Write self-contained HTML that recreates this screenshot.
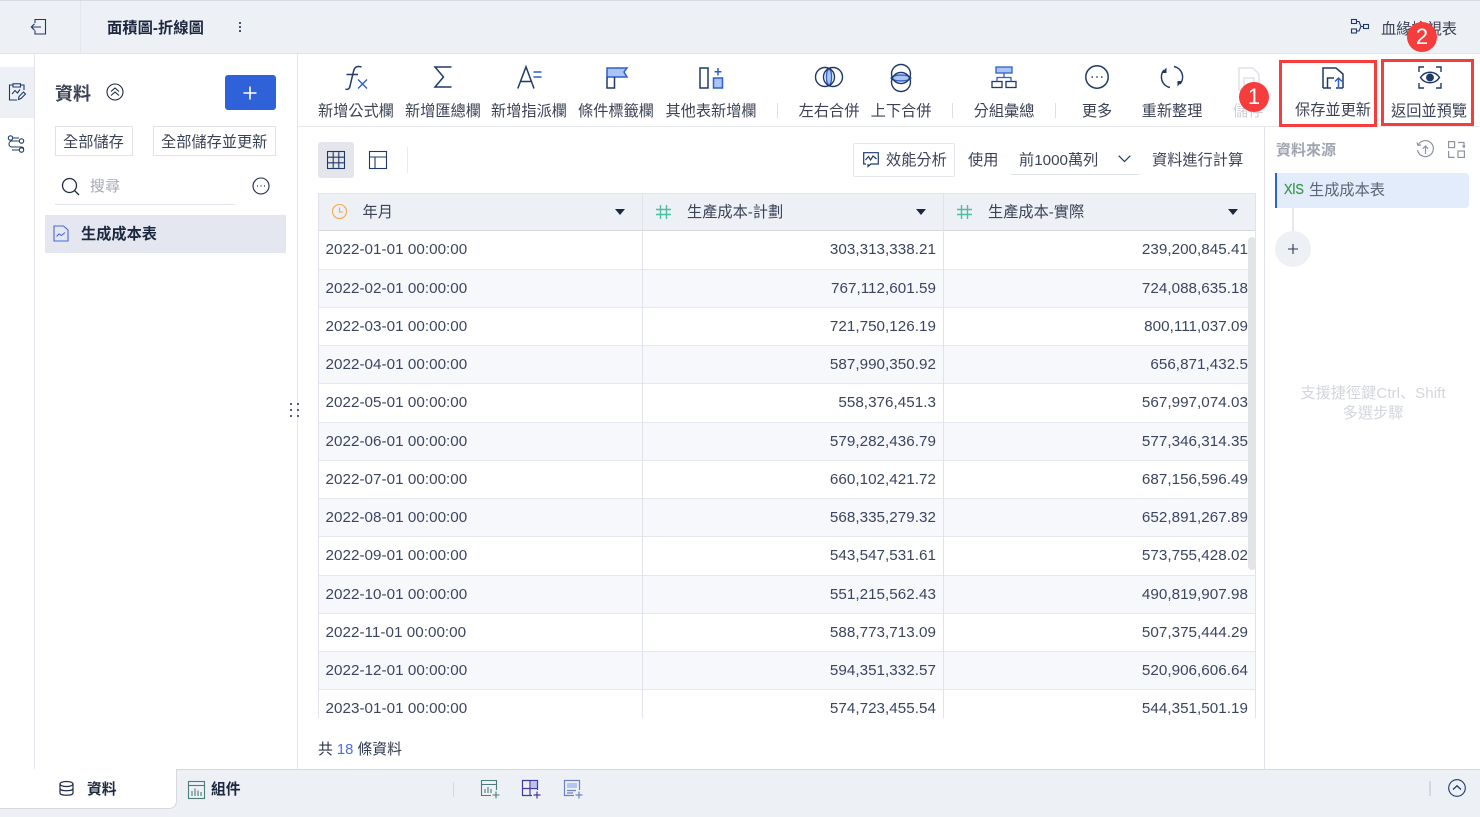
<!DOCTYPE html>
<html lang="zh-TW"><head><meta charset="utf-8"><title>面積圖-折線圖</title>
<style>
html,body{margin:0;padding:0;width:1480px;height:817px;overflow:hidden;background:#fff}
body{position:relative;font-family:"Liberation Sans","Noto Sans CJK SC",sans-serif;font-size:15.2px;color:#2c3650;fill:none;stroke:#1f3a68;stroke-width:1.5}
.a{position:absolute}
.t{position:absolute;white-space:nowrap;line-height:20px;height:20px}
.c{transform:translateX(-50%)}
.b{font-weight:700;color:#1d2740}
.l{color:#3a4356}
svg{position:absolute;overflow:visible}
.r{position:absolute;left:319px;width:937px;height:38.25px;border-bottom:1px solid #e6e8f0;box-sizing:border-box}
.r.e{background:#f7f8fc}
.r span{position:absolute;top:9px;line-height:20px;white-space:nowrap;color:#3a4560;letter-spacing:.04px}
.r .d{left:6.5px}.r .p{right:320px}.r .q{right:8px}
.bx{position:absolute;border:3px solid #f53d3d;box-sizing:border-box}
.dot{position:absolute;width:30px;height:30px;border-radius:50%;background:#f53d3d;color:#fff;font-size:22px;line-height:30px;text-align:center}
</style></head><body>

<!-- top bar -->
<div class="a" style="left:0;top:0;width:1480px;height:54px;background:#edf0f5;border-top:1px solid #d8dbe2;border-bottom:1px solid #e1e4ea;box-sizing:border-box"></div>
<div class="a" style="left:80px;top:1px;width:1px;height:52px;background:#e3e6ec"></div>
<svg style="left:30px;top:18px" width="18" height="18" viewBox="0 0 18 18" stroke-width="1.100"><path d="M5 5V1.500H15.500V16H5V12.500M11 9H1.500M4.500 5.800L1.300 9L4.500 12.200"/></svg>
<div class="t b" style="left:107px;top:19px;font-size:15.300px">面積圖-折線圖</div>
<div class="a" style="left:239px;top:22px;width:2px;height:2px;background:#444e60;box-shadow:0 4px #444e60,0 8px #444e60"></div>
<svg style="left:1351px;top:19px" width="18" height="16" viewBox="0 0 18 16" stroke-width="1.100"><rect x=".5" y=".5" width="5" height="4"/><rect x=".5" y="10" width="5" height="4"/><rect x="12.500" y="5.500" width="5" height="4"/><path d="M5.500 2.500H8L10 7.500H12.500M5.500 12H8L10 7.500"/></svg>
<div class="t l" style="left:1381px;top:20px;font-size:15.200px">血緣檢視表</div>

<!-- left rail -->
<div class="a" style="left:0;top:67px;width:34px;height:51px;background:#edf0f5"></div>
<div class="a" style="left:34px;top:54px;width:1px;height:715px;background:#e4e6ec"></div>
<svg style="left:8px;top:83px" width="18" height="18" viewBox="0 0 18 18" stroke-width="1.100"><path d="M5 2H1.500V17H9M12.500 2H16V7M5 .8H12.500V4H5ZM4 11L7 7.500L9.500 10L12 6.500"/><path d="M10.500 16.500L11 13.500L15.500 9L17.500 11L13 15.500Z" /></svg>
<svg style="left:7px;top:135px" width="18" height="18" viewBox="0 0 18 18" stroke-width="1.100"><circle cx="3.500" cy="3" r="2.200"/><circle cx="14.500" cy="6" r="2.200"/><circle cx="14.500" cy="15" r="2.200"/><path d="M5.700 3H12M12.300 6H5C1 6 1 12 5 12H14C15.500 12 16.500 12.500 16.500 13.500M12.300 15H5"/></svg>

<!-- data panel -->
<div class="a" style="left:297px;top:54px;width:1px;height:715px;background:#e4e6ec"></div>
<div class="t b" style="left:55px;top:84px;font-size:18px;color:#3a4254">資料</div>
<svg style="left:106px;top:83px" width="18" height="18" viewBox="0 0 18 18" stroke-width="1.100" stroke="#1f2a44"><circle cx="9" cy="9" r="8"/><path d="M5 8.500L9 5L13 8.500M5 12.500L9 9L13 12.500"/></svg>
<div class="a" style="left:225px;top:75px;width:51px;height:35px;background:#2f62d9;border-radius:3px"></div>
<svg style="left:243px;top:86px" width="14" height="14" viewBox="0 0 14 14" stroke="#fff" stroke-width="1.600"><path d="M7 .5V13.500M.5 7H13.500"/></svg>
<div class="a" style="left:55px;top:126px;width:78px;height:30px;border:1px solid #dfe2e9;box-sizing:border-box"></div>
<div class="t l" style="left:63px;top:133px">全部儲存</div>
<div class="a" style="left:153px;top:126px;width:123px;height:30px;border:1px solid #dfe2e9;box-sizing:border-box"></div>
<div class="t l" style="left:161px;top:133px">全部儲存並更新</div>
<svg style="left:61px;top:177px" width="19" height="19" viewBox="0 0 19 19" stroke-width="1.300" stroke="#1f2a44"><circle cx="8.500" cy="8.500" r="7"/><path d="M13.500 13.500L18 18"/></svg>
<div class="t" style="left:90px;top:177px;font-size:15px;color:#a4a9b4">搜尋</div>
<div class="a" style="left:55px;top:204px;width:180px;height:1px;background:#dfe2e9"></div>
<svg style="left:252px;top:177px" width="18" height="18" viewBox="0 0 18 18" stroke-width="1.100" stroke="#1f2a44"><circle cx="9" cy="9" r="8"/><path d="M5 9h1M8.500 9h1M12 9h1" stroke-width="1.300"/></svg>
<div class="a" style="left:45px;top:215px;width:241px;height:38px;background:#e4e7ef"></div>
<svg style="left:53px;top:225px" width="16" height="17" viewBox="0 0 16 17" stroke="#4a68d8" stroke-width="1.100"><path d="M1 1H10.500L15 5V16H1Z"/><path d="M3.500 11.500L6 9L8.500 10.500L12 7.500"/></svg>
<div class="t b" style="left:81px;top:225px;font-size:15.200px">生成成本表</div>
<div class="a" style="left:290px;top:403px;width:2px;height:2px;background:#555f70;box-shadow:0 6px #555f70,0 12px #555f70,7px 0 #555f70,7px 6px #555f70,7px 12px #555f70"></div>

<!-- toolbar -->
<div class="a" style="left:298px;top:126px;width:1182px;height:1px;background:#e6e8ec"></div>
<svg style="left:344px;top:65px" width="19" height="26" viewBox="0 0 19 26" stroke-width="1.500"><path d="M17.500 2C13 .5 10.500 2 9.500 6.500L6 21C5.500 24 3.500 25 1.500 24M2.500 9.500H14"/></svg>
<svg style="left:357px;top:79px" width="11" height="10" viewBox="0 0 11 10" stroke="#2f5fc8" stroke-width="1.400"><path d="M1 .5L10 9.500M10 .5L1 9.500"/></svg>
<svg style="left:434px;top:66px" width="18" height="22" viewBox="0 0 18 22"><path d="M17.500 1H1L9.500 11L1 21H17.500"/></svg>
<svg style="left:517px;top:66px" width="25" height="23" viewBox="0 0 25 23"><path d="M.8 22.500L9 .8L17 22.500M3.500 15.500H14.500"/><path d="M16.500 6H24.500M16.500 11H24.500" stroke="#2f5fc8"/></svg>
<svg style="left:606px;top:67px" width="22" height="22" viewBox="0 0 22 22"><path d="M1 1H21L18 5L21 10H1Z" fill="#a9c4f5" stroke="#2f5fc8"/><path d="M1 10V21H8.500V10" stroke="#1f3a68"/></svg>
<svg style="left:699px;top:67px" width="25" height="22" viewBox="0 0 25 22"><rect x="1" y="1" width="8" height="20"/><rect x="14.500" y="11" width="9" height="10" fill="#a9c4f5" stroke="#2f5fc8"/><path d="M19 1V8.500M15.500 4.800H22.500" stroke="#2f5fc8"/></svg>
<svg style="left:815px;top:66px" width="28" height="22" viewBox="0 0 28 22" stroke-width="1.400"><path d="M14 2.500C10.500 5 10.500 17 14 19.500C17.500 17 17.500 5 14 2.500Z" fill="#a9c4f5" stroke="#2f5fc8"/><circle cx="10" cy="11" r="9.500"/><circle cx="18" cy="11" r="9.500"/></svg>
<svg style="left:889px;top:64px" width="24" height="28" viewBox="0 0 24 28" stroke-width="1.400"><path d="M2 14C5 10 19 10 22 14C19 18 5 18 2 14Z" fill="#a9c4f5" stroke="#2f5fc8"/><circle cx="12" cy="10" r="9.500"/><circle cx="12" cy="18" r="9.500"/></svg>
<svg style="left:991px;top:66px" width="26" height="22" viewBox="0 0 26 22" stroke-width="1.300"><rect x="5" y="1" width="16" height="6" fill="#a9c4f5" stroke="#2f5fc8"/><rect x="1" y="15.500" width="10" height="6"/><rect x="15" y="15.500" width="10" height="6"/><path d="M13 7V11.500M6 15.500V11.500H20V15.500" stroke="#2f5fc8"/></svg>
<svg style="left:1085px;top:65px" width="24" height="24" viewBox="0 0 24 24"><circle cx="12" cy="12" r="11.200"/><path d="M6.500 12h1.500M11.300 12h1.500M16 12h1.500" stroke-width="1.500"/></svg>
<svg style="left:1160px;top:65px" width="24" height="24" viewBox="0 0 24 24" stroke-width="1.500"><path d="M14 1.500A10.700 10.700 0 0 1 20 19M4 5A10.700 10.700 0 0 0 10 22.500"/><path d="M6.500 2.500V8H1.500ZM17.500 21.500V16H22.500Z" fill="#1f3a68" stroke="none"/></svg>
<svg style="left:1238px;top:67px" width="22" height="24" viewBox="0 0 22 24" stroke="#dfe2e8"><path d="M1 1H15L21 7V23H1Z"/><rect x="6" y="11" width="10" height="9"/></svg>

<div class="t l c" style="left:356px;top:102px">新增公式欄</div>
<div class="t l c" style="left:443px;top:102px">新增匯總欄</div>
<div class="t l c" style="left:529px;top:102px">新增指派欄</div>
<div class="t l c" style="left:616px;top:102px">條件標籤欄</div>
<div class="t l c" style="left:711px;top:102px">其他表新增欄</div>
<div class="t l c" style="left:829px;top:102px">左右合併</div>
<div class="t l c" style="left:901px;top:102px">上下合併</div>
<div class="t l c" style="left:1004px;top:102px">分組彙總</div>
<div class="t l c" style="left:1097px;top:102px">更多</div>
<div class="t l c" style="left:1172px;top:102px">重新整理</div>
<div class="t c" style="left:1248px;top:102px;color:#cdd0d6">儲存</div>
<div class="a" style="left:777px;top:103px;width:1px;height:15px;background:#dcdfe5"></div>
<div class="a" style="left:952px;top:103px;width:1px;height:15px;background:#dcdfe5"></div>
<div class="a" style="left:1055px;top:103px;width:1px;height:15px;background:#dcdfe5"></div>

<svg style="left:1322px;top:67px" width="23" height="22" viewBox="0 0 23 22"><path d="M1 21V1H14L21 7V21M21 21H14M1 21H9M5.500 21V11H12"/><path d="M16.500 21.500V11M13 14.500L16.500 11L20 14.500" stroke="#2f5fc8"/></svg>
<div class="t l" style="left:1295px;top:101px">保存並更新</div>
<svg style="left:1418px;top:66px" width="24" height="23" viewBox="0 0 24 23"><path d="M1 6V1H6M18 1H23V6M1 17V22H6M18 22H23V17" stroke-width="1.400"/><path d="M2.500 11.500C7 4.500 17 4.500 21.500 11.500C17 18.500 7 18.500 2.500 11.500Z"/><circle cx="12" cy="11.500" r="3.200" fill="#1f3a68"/></svg>
<div class="t l" style="left:1391px;top:102px">返回並預覽</div>

<!-- view controls -->
<div class="a" style="left:318px;top:142px;width:36px;height:36px;background:#e4e6eb;border-radius:3px"></div>
<svg style="left:327px;top:151px" width="18" height="18" viewBox="0 0 18 18" stroke-width="1.100"><rect x=".5" y=".5" width="17" height="17"/><path d="M.5 6.200H17.500M.5 11.800H17.500M6.200 .5V17.500M11.800 .5V17.500"/></svg>
<svg style="left:369px;top:151px" width="18" height="18" viewBox="0 0 18 18" stroke-width="1.100"><rect x=".5" y=".5" width="17" height="17"/><path d="M.5 6H17.500M6 6V17.500"/></svg>
<div class="a" style="left:407px;top:147px;width:1px;height:26px;background:#e8eaef"></div>
<div class="a" style="left:853px;top:143px;width:102px;height:34px;border:1px solid #e4e6eb;border-radius:2px;box-sizing:border-box"></div>
<svg style="left:863px;top:152px" width="16" height="15" viewBox="0 0 16 15" stroke-width="1.200"><path d="M3 12H.7V.7H15.300V12H8L5 14.500V12"/><path d="M2.500 8L5.500 4.500L7.500 8L10 4L13.500 7"/></svg>
<div class="t l" style="left:886px;top:151px">效能分析</div>
<div class="t l" style="left:968px;top:151px">使用</div>
<div class="t l" style="left:1019px;top:151px">前1000萬列</div>
<svg style="left:1118px;top:155px" width="13" height="8" viewBox="0 0 13 8" stroke-width="1.200"><path d="M.7 .7L6.500 6.500L12.300 .7"/></svg>
<div class="a" style="left:1011px;top:174px;width:128px;height:1px;background:#dfe2e9"></div>
<div class="t l" style="left:1152px;top:151px">資料進行計算</div>

<!-- table -->
<div class="a" style="left:318px;top:193px;width:938px;height:38px;background:#edf0f5;border-top:1px solid #e4e6ec;border-bottom:1px solid #d5d8e0;box-sizing:border-box"></div>
<svg style="left:332px;top:204px" width="15" height="15" viewBox="0 0 15 15" stroke="#f2a94e" stroke-width="1.100"><circle cx="7.500" cy="7.500" r="7"/><path d="M7.500 3.500V8H11"/></svg>
<div class="t l" style="left:362.500px;top:203px;font-size:15.200px">年月</div>
<div class="a" style="left:615px;top:209px;width:0;height:0;border:5px solid transparent;border-top:6px solid #1d2740;border-bottom:0"></div>
<svg style="left:656px;top:205px" width="15" height="14" viewBox="0 0 15 14" stroke="#4dbda4" stroke-width="1.400"><path d="M4.500 0V14M10.500 0V14M0 4.500H15M0 9.500H15"/></svg>
<div class="t l" style="left:687px;top:203px;font-size:15.200px">生產成本-計劃</div>
<div class="a" style="left:916px;top:209px;width:0;height:0;border:5px solid transparent;border-top:6px solid #1d2740;border-bottom:0"></div>
<svg style="left:957px;top:205px" width="15" height="14" viewBox="0 0 15 14" stroke="#4dbda4" stroke-width="1.400"><path d="M4.500 0V14M10.500 0V14M0 4.500H15M0 9.500H15"/></svg>
<div class="t l" style="left:988px;top:203px;font-size:15.200px">生產成本-實際</div>
<div class="a" style="left:1228px;top:209px;width:0;height:0;border:5px solid transparent;border-top:6px solid #1d2740;border-bottom:0"></div>

<div class="a" style="left:0;top:0;width:1480px;height:718px;overflow:hidden;pointer-events:none">
<div class="r" style="top:231.250px"><span class="d">2022-01-01 00:00:00</span><span class="p">303,313,338.21</span><span class="q">239,200,845.41</span></div>
<div class="r e" style="top:269.500px"><span class="d">2022-02-01 00:00:00</span><span class="p">767,112,601.59</span><span class="q">724,088,635.18</span></div>
<div class="r" style="top:307.750px"><span class="d">2022-03-01 00:00:00</span><span class="p">721,750,126.19</span><span class="q">800,111,037.09</span></div>
<div class="r e" style="top:346px"><span class="d">2022-04-01 00:00:00</span><span class="p">587,990,350.92</span><span class="q">656,871,432.5</span></div>
<div class="r" style="top:384.250px"><span class="d">2022-05-01 00:00:00</span><span class="p">558,376,451.3</span><span class="q">567,997,074.03</span></div>
<div class="r e" style="top:422.500px"><span class="d">2022-06-01 00:00:00</span><span class="p">579,282,436.79</span><span class="q">577,346,314.35</span></div>
<div class="r" style="top:460.750px"><span class="d">2022-07-01 00:00:00</span><span class="p">660,102,421.72</span><span class="q">687,156,596.49</span></div>
<div class="r e" style="top:499px"><span class="d">2022-08-01 00:00:00</span><span class="p">568,335,279.32</span><span class="q">652,891,267.89</span></div>
<div class="r" style="top:537.250px"><span class="d">2022-09-01 00:00:00</span><span class="p">543,547,531.61</span><span class="q">573,755,428.02</span></div>
<div class="r e" style="top:575.500px"><span class="d">2022-10-01 00:00:00</span><span class="p">551,215,562.43</span><span class="q">490,819,907.98</span></div>
<div class="r" style="top:613.750px"><span class="d">2022-11-01 00:00:00</span><span class="p">588,773,713.09</span><span class="q">507,375,444.29</span></div>
<div class="r e" style="top:652px"><span class="d">2022-12-01 00:00:00</span><span class="p">594,351,332.57</span><span class="q">520,906,606.64</span></div>
<div class="r" style="top:690.250px"><span class="d">2023-01-01 00:00:00</span><span class="p">574,723,455.54</span><span class="q">544,351,501.19</span></div>
</div>
<div class="a" style="left:642px;top:193px;width:1px;height:525px;background:#e1e3ea"></div>
<div class="a" style="left:943px;top:193px;width:1px;height:525px;background:#e1e3ea"></div>
<div class="a" style="left:318px;top:193px;width:1px;height:525px;background:#e1e3ea"></div>
<div class="a" style="left:1255px;top:193px;width:1px;height:525px;background:#e1e3ea"></div>
<div class="a" style="left:1248px;top:237px;width:8px;height:333px;background:#e2e4e8;border-radius:4px"></div>
<div class="t" style="left:318px;top:740px;font-size:14.800px;color:#2c3650">共 <span style="color:#4a6fe0">18</span> 條資料</div>

<!-- right panel -->
<div class="a" style="left:1264px;top:127px;width:1px;height:642px;background:#e1e3ea"></div>
<div class="t" style="left:1276px;top:141px;font-size:15px;color:#9fa5b0;font-weight:700">資料來源</div>
<svg style="left:1416px;top:140px" width="19" height="19" viewBox="0 0 19 19" stroke="#8d939f" stroke-width="1.200"><path d="M2 5.500A8 8 0 1 1 1.500 10M1 2.500L2 5.500L5 5M9.500 14V6M6.800 8.700L9.500 6L12.200 8.700"/></svg>
<svg style="left:1448px;top:141px" width="17" height="17" viewBox="0 0 17 17" stroke="#8d939f" stroke-width="1.200"><rect x=".6" y=".6" width="6" height="6"/><rect x="10" y="10" width="6.400" height="6.400"/><path d="M.6 10V16.400H6.600M10 1.500H16V6M14.500 4.500L16 6.500L17 4.500"/></svg>
<div class="a" style="left:1275px;top:173px;width:194px;height:35px;background:#e3ecfb;border-left:2px solid #2f62d9;border-radius:0 4px 4px 0;box-sizing:border-box"></div>
<div class="t" style="left:1284px;top:180px;font-size:15px;font-weight:400;color:#3c9a4a;transform:scaleX(.85);transform-origin:0 50%;-webkit-text-stroke:.3px #3c9a4a">XlS</div>
<div class="t" style="left:1309px;top:181px;font-size:15.200px;color:#5c6576">生成成本表</div>
<div class="a" style="left:1292px;top:208px;width:2px;height:24px;background:#e6e8ee"></div>
<div class="a" style="left:1275px;top:231px;width:36px;height:36px;border-radius:50%;background:#edf0f5"></div>
<svg style="left:1288px;top:244px" width="10" height="10" viewBox="0 0 10 10" stroke-width="1.100" stroke="#2c3650"><path d="M5 0V10M0 5H10"/></svg>
<div class="t c" style="left:1373px;top:384px;font-size:15.200px;color:#d3d6dc">支援捷徑鍵Ctrl、Shift</div>
<div class="t c" style="left:1373px;top:404px;font-size:15.200px;color:#d3d6dc">多選步驟</div>

<!-- red highlights -->
<div class="bx" style="left:1279px;top:60px;width:98px;height:67px"></div>
<div class="bx" style="left:1381px;top:59px;width:93px;height:67px"></div>
<div class="dot" style="left:1239px;top:82px">1</div>
<div class="dot" style="left:1407px;top:22px">2</div>

<!-- bottom bar -->
<div class="a" style="left:0;top:769px;width:1480px;height:48px;background:#edf0f5;border-top:1px solid #d5d8e0;box-sizing:border-box"></div>
<div class="a" style="left:0;top:769px;width:177px;height:40px;background:#fff;border-right:1px solid #d5d8e0;border-bottom:1px solid #d5d8e0;border-radius:0 0 8px 0;box-sizing:border-box"></div>
<svg style="left:59px;top:781px" width="15" height="15" viewBox="0 0 15 15" stroke-width="1.200" stroke="#1f2a44"><ellipse cx="7.500" cy="3" rx="6.500" ry="2.500"/><path d="M1 3V12C1 15 14 15 14 12V3M1 7.500C1 10.500 14 10.500 14 7.500"/></svg>
<div class="t b" style="left:87px;top:780px;font-size:14.800px">資料</div>
<svg style="left:188px;top:781px" width="17" height="18" viewBox="0 0 17 18" stroke="#4d7d78" stroke-width="1.100"><rect x=".5" y=".5" width="16" height="17"/><path d="M.5 4.500H16.500"/><path d="M4 15V10M7 15V7.500M10 15V9.500M13 15V11"/></svg>
<div class="t b" style="left:211px;top:780px;font-size:14.800px">組件</div>
<div class="a" style="left:453px;top:782px;width:1px;height:15px;background:#d5d8e0"></div>
<svg style="left:481px;top:780px" width="19" height="19" viewBox="0 0 19 19" stroke="#4d7d78" stroke-width="1.100"><path d="M15.500 10V.5H.5V15.500H10M.5 4.500H15.500M4 13V9M7 13V7M10 13V9M15 11.500V18.500M11.500 15H18.500"/></svg>
<svg style="left:522px;top:780px" width="19" height="19" viewBox="0 0 19 19" stroke="#4338a8" stroke-width="1.200"><rect x="9" y="1.500" width="6" height="6" fill="#b8c3ee" stroke="none"/><path d="M15.500 10V.5H.5V15.500H10M.5 8.500H15.500M8 .5V15.500M15 11.500V18.500M11.500 15H18.500"/></svg>
<svg style="left:564px;top:780px" width="19" height="19" viewBox="0 0 19 19" stroke="#6a82c8" stroke-width="1.200"><rect x="3" y="3" width="10" height="5" fill="#b8c3ee" stroke="none"/><path d="M15.500 10V.5H.5V15.500H10M3 10.500H12M3 13H9M15 11.500V18.500M11.500 15H18.500"/></svg>
<div class="a" style="left:1429px;top:781px;width:2px;height:15px;background:#d5d8e0"></div>
<svg style="left:1448px;top:779px" width="18" height="18" viewBox="0 0 18 18" stroke-width="1.100"><circle cx="9" cy="9" r="8.300"/><path d="M5 10.500L9 6.800L13 10.500" stroke-width="1.300"/></svg>

</body></html>
